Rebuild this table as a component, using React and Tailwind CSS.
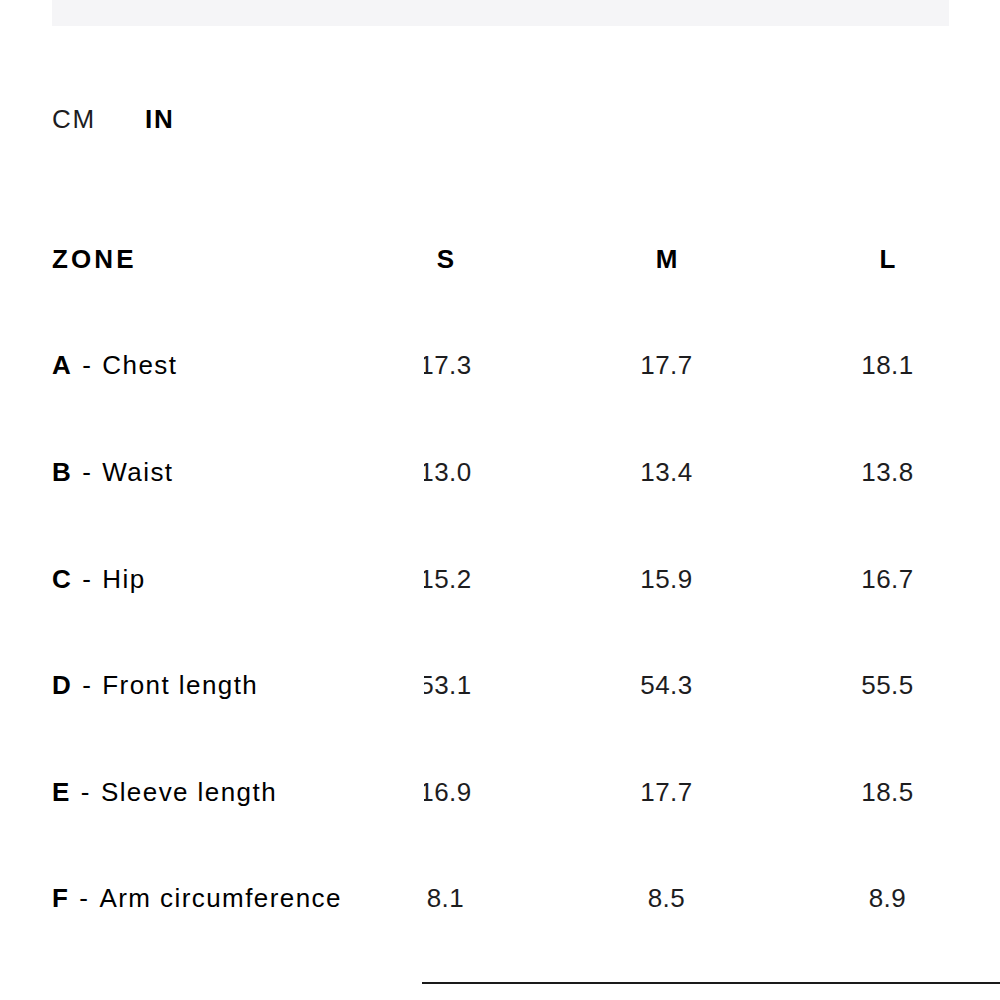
import React from 'react';

const sizes = ['S', 'M', 'L'];

const rows = [
  { zone: 'A', label: 'Chest', values: ['17.3', '17.7', '18.1'] },
  { zone: 'B', label: 'Waist', values: ['13.0', '13.4', '13.8'] },
  { zone: 'C', label: 'Hip', values: ['15.2', '15.9', '16.7'] },
  { zone: 'D', label: 'Front length', values: ['53.1', '54.3', '55.5'] },
  { zone: 'E', label: 'Sleeve length', values: ['16.9', '17.7', '18.5'] },
  { zone: 'F', label: 'Arm circumference', values: ['8.1', '8.5', '8.9'] },
];

function ValueCells({ children }) {
  return (
    <div className="flex-1 overflow-hidden">
      <div className="ml-[-89px] flex">{children}</div>
    </div>
  );
}

function HeaderRow() {
  return (
    <div className="flex h-[106.6px] items-center">
      <div className="w-[372px] shrink-0 text-[26px] font-bold tracking-[0.12em] text-black">ZONE</div>
      <ValueCells>
        {sizes.map((s) => (
          <div key={s} className="w-[221px] shrink-0 text-center text-[26px] font-bold text-black">
            {s}
          </div>
        ))}
      </ValueCells>
    </div>
  );
}

function MeasureRow({ zone, label, values }) {
  return (
    <div className="flex h-[106.6px] items-center">
      <div className="w-[372px] shrink-0 whitespace-nowrap text-[26px] tracking-[0.055em] text-black">
        <span className="font-bold">{zone}</span>
        <span className="ml-[10px]">-</span>
        <span className="ml-[10px]">{label}</span>
      </div>
      <ValueCells>
        {values.map((v, i) => (
          <div key={i} className="w-[221px] shrink-0 text-center text-[26px] tracking-[0.02em] text-[#1d1d1f]">
            {v}
          </div>
        ))}
      </ValueCells>
    </div>
  );
}

export default function App() {
  return (
    <div
      className="h-[1000px] w-[1000px] overflow-hidden bg-white"
      style={{ fontFamily: '"Liberation Sans", Arial, sans-serif' }}
    >
      <div className="ml-[52px] mr-[51px] h-[26px] bg-[#f5f5f7]" />

      <div className="mt-[80px] flex h-[26px] items-center gap-[49px] pl-[52px] text-[26px] leading-[26px] tracking-[0.07em]">
        <button className="text-[#1d1d1f]">CM</button>
        <button className="font-bold text-black">IN</button>
      </div>

      <div className="mt-[74px] pl-[52px]">
        <HeaderRow />
        {rows.map((r) => (
          <MeasureRow key={r.zone} {...r} />
        ))}
        <div className="mt-[30px] flex">
          <div className="w-[370px] shrink-0" />
          <div className="h-[2px] flex-1 bg-[#1a1a1a]" />
        </div>
      </div>
    </div>
  );
}
